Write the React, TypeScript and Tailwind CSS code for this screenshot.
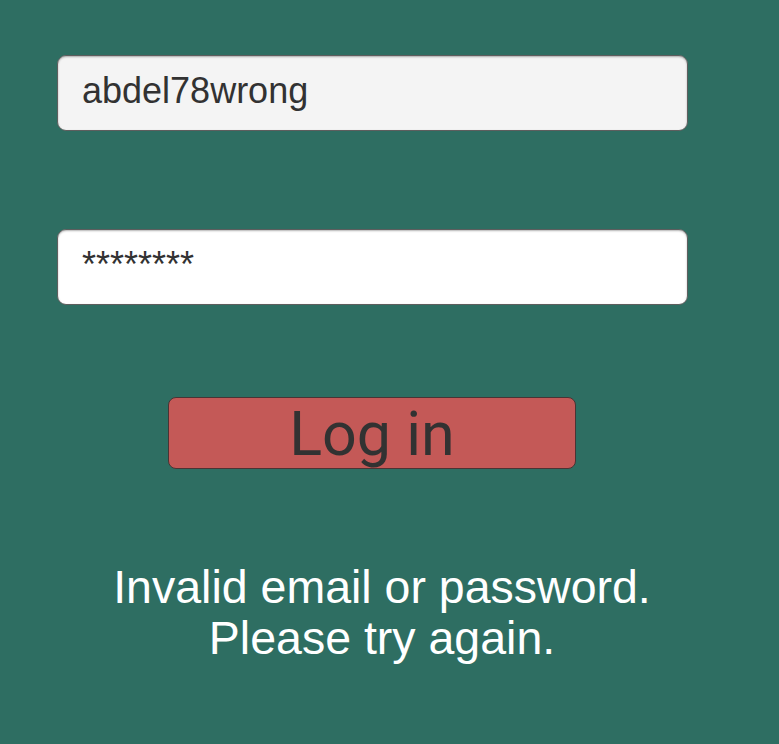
import React from "react";

const App: React.FC = () => {
  return (
    <div
      className="w-[779px] h-[744px] bg-[#2e6e62] overflow-hidden"
      style={{ fontFamily: '"Liberation Sans", Arial, sans-serif' }}
    >
      <div className="flex flex-col pt-[55px] pl-[57px] w-[687px]">
        <div className="h-[76px] w-[631px] rounded-[9px] border border-[#5e5e5e] bg-[#f4f4f4] shadow-[inset_0_1px_2px_rgba(0,0,0,0.3)] pl-[24px] pt-[15px] text-[36px] leading-[40px] text-[#323232]">
          abdel78wrong
        </div>

        <div className="mt-[98px] h-[76px] w-[631px] rounded-[9px] border border-[#5e5e5e] bg-white shadow-[inset_0_1px_2px_rgba(0,0,0,0.3)] pl-[24px] pt-[15px] text-[36px] leading-[40px] text-[#323232]">
          ********
        </div>

        <div className="mt-[92px] flex justify-center">
          <button
            className="h-[72px] w-[408px] rounded-[8px] border border-[#4a3434] bg-[#c45957] text-center text-[61px] leading-[72px] text-[#323232]"
            style={{ fontFamily: "Roboto, sans-serif" }}
          >
            Log in
          </button>
        </div>

        <div className="mt-[93px] pl-[20px] text-center text-[46.5px] leading-[51px] text-white">
          <p>Invalid email or password.</p>
          <p>Please try again.</p>
        </div>
      </div>
    </div>
  );
};

export default App;
